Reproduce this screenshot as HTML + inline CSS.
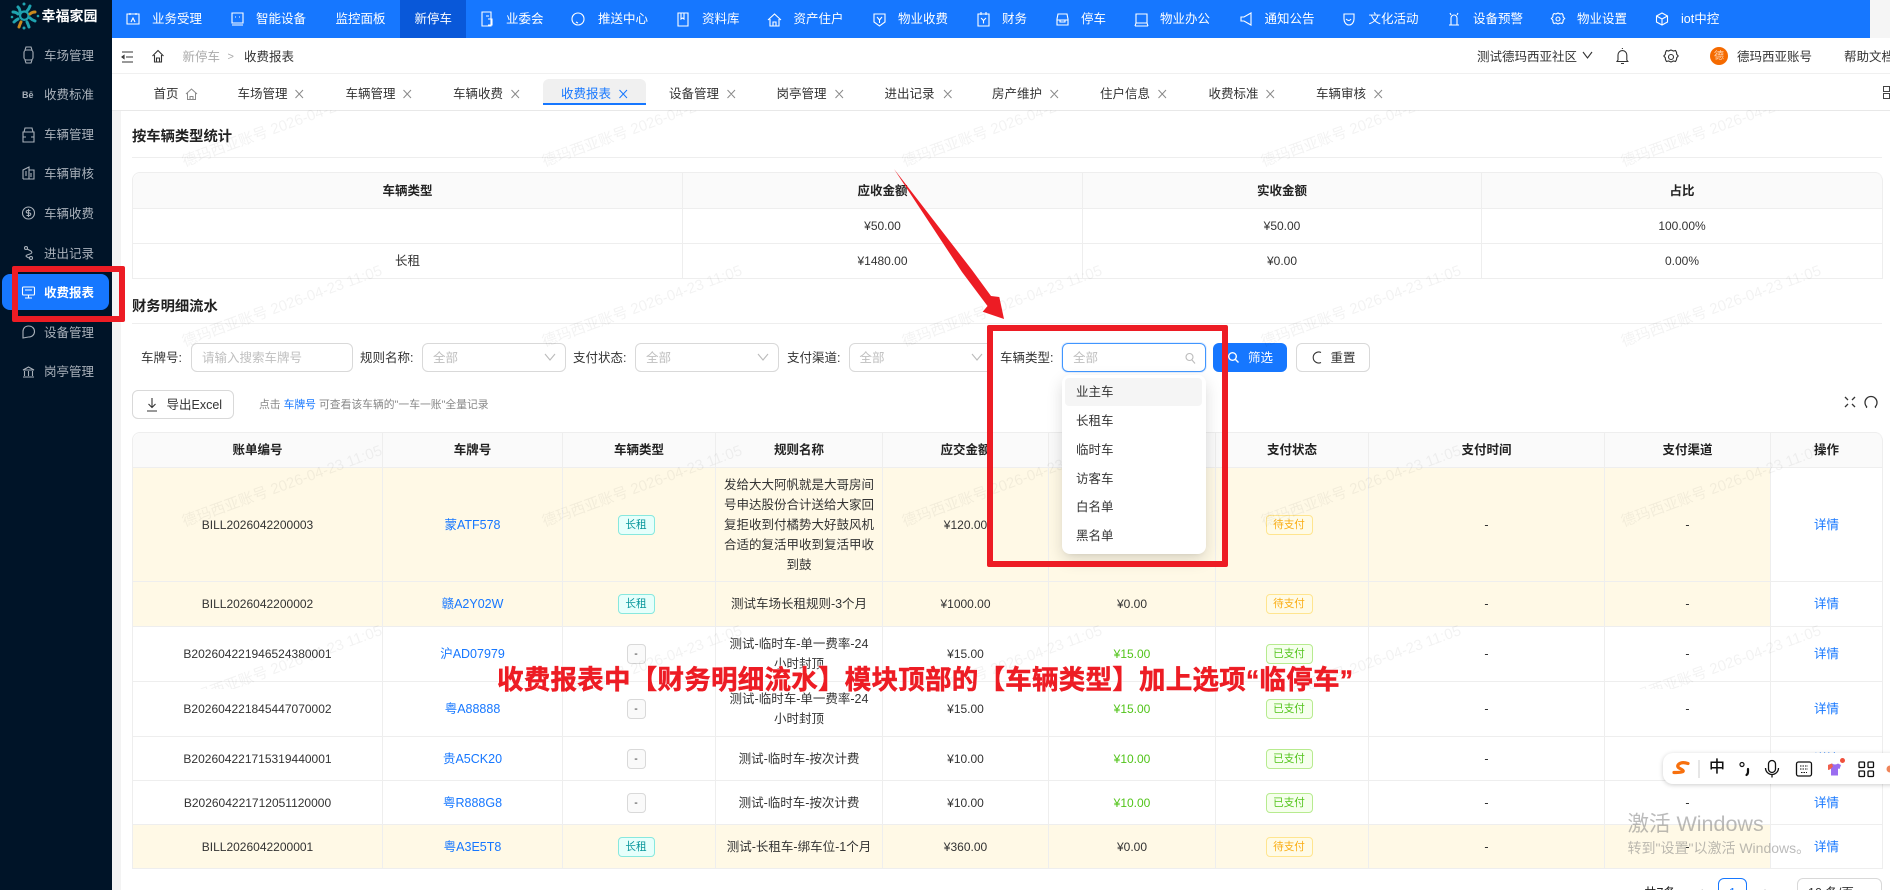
<!DOCTYPE html>
<html lang="zh-CN"><head><meta charset="utf-8"><title>收费报表</title>
<style>
*{box-sizing:border-box}
html,body{margin:0;padding:0;width:1890px;height:890px;overflow:hidden;background:#fff}
body{position:relative;font-family:"Liberation Sans","Noto Sans CJK SC",sans-serif;font-size:12.5px;color:#333}
.a{position:absolute;white-space:nowrap;line-height:20px}
.b{position:absolute}
svg{position:absolute;overflow:visible;fill:none}
.w{color:#fff}
.m{color:#a9b1ba;left:44px}
.ic{stroke:#a9b1ba;stroke-width:1.1}
.wi{stroke:#fff;stroke-width:1.1}
.box{position:absolute;top:343px;height:29px;background:#fff;border:1px solid #d9d9d9;border-radius:6px}
.ph{color:#bfbfbf}
table{position:absolute;border-collapse:separate;border-spacing:0;table-layout:fixed;left:132px;width:1750px;background:#fff;border-top:1px solid #eee;border-left:1px solid #eee;border-top-left-radius:8px;border-top-right-radius:8px;font-size:12.5px;color:#333}
th,td{border-right:1px solid #eee;border-bottom:1px solid #eee;text-align:center;padding:0 1px;line-height:20px;font-weight:400}
th{background:#fafafa;font-weight:700;color:#222}
th:first-child{border-top-left-radius:8px}
th:last-child{border-top-right-radius:8px}
tr.y td{background:#fff9e6}
tr.y td:last-child{background:#fff}
.n{font-size:12px}
.l{color:#1677ff}
.g{color:#52c41a;font-size:12px}
.tag{display:inline-block;position:relative;left:-3px;height:20px;line-height:18px;border-radius:4px;border:1px solid;font-size:10.6px;vertical-align:middle}
.z{width:37px;background:#e6fffb;border-color:#87e8de;color:#08979c}
.d{width:19px;background:#fafafa;border-color:#d9d9d9;color:#333}
.p{width:47px;background:#fffbe6;border-color:#ffe58f;color:#faad14}
.k{width:47px;background:#f6ffed;border-color:#b7eb8f;color:#52c41a}
#wm{position:absolute;left:120px;top:110px;width:1770px;height:579px;overflow:hidden;z-index:3;pointer-events:none}
#wm span{position:absolute;white-space:nowrap;font-size:15px;line-height:20px;color:rgba(0,0,0,.05);transform:rotate(-20deg);transform-origin:0 50%}
</style></head><body>

<!-- sidebar -->
<div class="b" style="left:0;top:0;width:112px;height:890px;background:#001428"></div>
<svg style="left:0;top:0" width="112" height="32">
<g stroke-width="3" stroke-linecap="round">
<circle cx="24.3" cy="15.7" r="4.2" stroke="#1fa3b0" stroke-width="2.2"/>
<path d="M18 7q2 2 2 5" stroke="#1fa3b0"/><path d="M30 6q-1 3-3 5" stroke="#1fa3b0"/><path d="M35 12q-3 0-5 2" stroke="#c98a1e"/><path d="M35 21q-3-1-5-3" stroke="#1fa3b0"/><path d="M29 27q-1-3-2-5" stroke="#1fa3b0"/><path d="M19 27q1-3 2-5" stroke="#c98a1e"/><path d="M14 22q2-2 4-3" stroke="#1fa3b0"/><path d="M13 12q3 0 5 2" stroke="#1fa3b0"/>
</g>
<g fill="#1fa3b0"><circle cx="24" cy="4" r="1.5"/><circle cx="38" cy="16" r="1.3"/><circle cx="24" cy="28" r="1.5"/><circle cx="12" cy="17" r="1.3"/></g>
</svg>
<span class="a w" style="left:41.5px;top:6px;font-size:14px;font-weight:700">幸福家园</span>

<div class="b" style="left:2px;top:274px;width:107px;height:36px;background:#1677ff;border-radius:8px"></div>
<span class="a m" style="top:46px">车场管理</span>
<span class="a m" style="top:85px">收费标准</span>
<span class="a m" style="top:125px">车辆管理</span>
<span class="a m" style="top:164px">车辆审核</span>
<span class="a m" style="top:204px">车辆收费</span>
<span class="a m" style="top:244px">进出记录</span>
<span class="a" style="left:44px;top:283px;color:#fff;font-weight:700">收费报表</span>
<span class="a m" style="top:323px">设备管理</span>
<span class="a m" style="top:362px">岗亭管理</span>
<span class="a" style="left:22px;top:85px;font-size:9px;font-weight:700;color:#a9b1ba">Bē</span>
<svg style="left:0;top:0" width="112" height="400">
<g class="ic"><rect x="24" y="50" width="9" height="10" rx="2.5"/><path d="M25 50l1-3h5l1 3M25 60l1 3h5l1-3"/></g>
<g class="ic"><path d="M23 171h11v10H23zM24 171l1-4h7l1 4M23 176h3M31 176h3" transform="translate(0,-39)"/></g>
<g class="ic"><path d="M23 179v-9l6-3v12M29 170h5v9H23M26 171v5M31 173v4"/></g>
<g class="ic"><circle cx="28.5" cy="213" r="6"/><path d="M30.5 210.5h-3a1.2 1.2 0 000 2.500h2a1.200 1.200 0 010 2.500h-3M28.500 209v8"/></g>
<g class="ic"><circle cx="26" cy="248" r="1.500"/><circle cx="31" cy="258" r="1.500"/><path d="M27 249l4 2q2 2-1 3l-3 1q-2 1 0 2l2 1"/></g>
<g class="wi"><rect x="22.500" y="287" width="12" height="8" rx="1"/><path d="M28.500 295v2.500M25 298h7M25 290h7"/></g>
<g class="ic"><path d="M28.500 326c3.600 0 6 2.400 6 5.500s-2.400 5.500-6 5.500l-5.500 1v-6.500c0-3.100 2-5.500 5.500-5.500z"/></g>
<g class="ic"><path d="M23 370l5.500-3 5.500 3zM23 377h11M24.500 371v5M28.500 371v5M32.500 371v5"/></g>
</svg>

<!-- top bar -->
<div class="b" style="left:112px;top:0;width:1758px;height:38px;background:#1677ff"></div>
<div class="b" style="left:1870px;top:0;width:20px;height:38px;background:#f5f5f5"></div>
<div class="b" style="left:400px;top:0;width:66px;height:38px;background:#0958d9"></div>
<span class="a w" style="left:152px;top:9px">业务受理</span>
<span class="a w" style="left:256px;top:9px">智能设备</span>
<span class="a w" style="left:335.500px;top:9px">监控面板</span>
<span class="a w" style="left:414.500px;top:9px">新停车</span>
<span class="a w" style="left:506px;top:9px">业委会</span>
<span class="a w" style="left:598px;top:9px">推送中心</span>
<span class="a w" style="left:702px;top:9px">资料库</span>
<span class="a w" style="left:793.500px;top:9px">资产住户</span>
<span class="a w" style="left:898px;top:9px">物业收费</span>
<span class="a w" style="left:1002px;top:9px">财务</span>
<span class="a w" style="left:1081px;top:9px">停车</span>
<span class="a w" style="left:1160px;top:9px">物业办公</span>
<span class="a w" style="left:1264.500px;top:9px">通知公告</span>
<span class="a w" style="left:1368.500px;top:9px">文化活动</span>
<span class="a w" style="left:1473px;top:9px">设备预警</span>
<span class="a w" style="left:1577px;top:9px">物业设置</span>
<span class="a w" style="left:1681px;top:9px">iot中控</span>
<svg style="left:0;top:0" width="1890" height="38"><g class="wi">
<path d="M127 14h12v10h-12zM130 13v2M136 13v2M131 22l2-4 2 4"/>
<path d="M232 13h11v10h-11zM232 25h11M235 17h1M239 17h1"/>
<path d="M482 12h9v14h-9zM486 16h3M488 19h4v6h-4"/>
<path d="M578 13c3.300 0 6 2.500 6 6s-2.700 6-6 6c-3.300 0-6-2.500-6-6s2.700-6 6-6zM576 22l2 1"/>
<path d="M678 13h10v13h-10zM681 13v6l1.500-1 1.500 1v-6"/>
<path d="M768 20l6.500-6 6.500 6M770 19v7h9v-7M773 26v-4h3v4"/>
<path d="M874 14h11v8l-5.500 4-5.500-4zM877 17l2.500 3 2.500-3M879.500 20v3"/>
<path d="M978 14h11v12h-11zM981 12v3M986 12v3M981 18l2.500 2.500 2.500-2.500M983.500 20.500v3"/>
<path d="M1057 25v-6l1-5h9l1 5v6zM1057 20h11M1060 20v2h5v-2"/>
<path d="M1136 14h11v9h-11zM1135 26h13M1136 23l-1 3M1147 23l1 3"/>
<path d="M1251 13v12l-7-4h-3v-4h3z"/>
<path d="M1344 14h10v5c0 3-2 6-5 6s-5-3-5-6zM1346 19q3 3 5 0"/>
<path d="M1449 25h10M1451 25v-7a3 3 0 016 0v7M1450 13l1 2M1458 13l-1 2"/>
<path d="M1558 13l2 1 2-.5 1 1.500.2 2 1.500 1.500-1.500 1.500-.2 2-1 1.500-2-.5-2 1-2-1-2 .5-1-1.500-.2-2-1.500-1.500 1.500-1.500.2-2 1-1.500 2 .5z"/><circle cx="1558" cy="19" r="2"/>
<path d="M1662 13l5.500 3v6l-5.500 3-5.500-3v-6zM1656.500 16l5.500 3 5.500-3M1662 19v6"/>
</g></svg>

<!-- header row -->
<div class="b" style="left:112px;top:73px;width:1778px;height:1px;background:#f0f0f0"></div>
<span class="a" style="left:182.500px;top:46.500px;color:#aaa">新停车</span>
<span class="a" style="left:227.500px;top:46.500px;color:#aaa;font-size:11px">&gt;</span>
<span class="a" style="left:244px;top:46.500px">收费报表</span>
<span class="a" style="left:1477px;top:46.500px">测试德玛西亚社区</span>
<span class="a" style="left:1737px;top:46.500px">德玛西亚账号</span>
<span class="a" style="left:1844px;top:47px">帮助文档</span>
<div class="b" style="left:1710px;top:47px;width:18px;height:18px;border-radius:50%;background:#f56a00"></div>
<span class="a" style="left:1714px;top:46.500px;width:10px;color:#ffd9b8;font-size:10px;text-align:center">德</span>
<svg style="left:0;top:0" width="1890" height="74"><g stroke="#333" stroke-width="1.100">
<path d="M122 52h11M126 57h7M122 62h11M122 57l2-1.500v3z"/>
<path d="M152.500 56l5.500-5.500 5.500 5.500M154.500 55v7h7v-7M156.500 62v-4h3v4"/>
<path d="M1583 52l4.500 6 4.500-6"/>
<path d="M1618 60v-5a4.400 4.400 0 018.800 0v5l1 1.500h-10.800zM1621 63.500h3M1622.400 49v-1"/>
<path d="M1671 50l2.500 1 2-.5 1 1.800.2 2 1.500 1.700-1.500 1.700-.2 2-1 1.800-2-.5-2.500 1-2.500-1-2 .5-1-1.800-.2-2-1.500-1.700 1.500-1.700.2-2 1-1.800 2 .5z"/><circle cx="1671" cy="57" r="2.500"/>
</g></svg>

<!-- tabs -->
<div class="b" style="left:112px;top:110px;width:1778px;height:1px;background:#e8e8e8"></div>
<div class="b" style="left:543px;top:78.500px;width:103px;height:26.500px;background:#f0f0f0;border-bottom:2px solid #1677ff;border-radius:6px 6px 0 0"></div>
<span class="a" style="left:153.500px;top:84px">首页</span>
<span class="a" style="left:237.500px;top:84px">车场管理</span>
<span class="a" style="left:345.500px;top:84px">车辆管理</span>
<span class="a" style="left:453px;top:84px">车辆收费</span>
<span class="a l" style="left:561px;top:84px">收费报表</span>
<span class="a" style="left:669px;top:84px">设备管理</span>
<span class="a" style="left:776.500px;top:84px">岗亭管理</span>
<span class="a" style="left:884.500px;top:84px">进出记录</span>
<span class="a" style="left:992px;top:84px">房产维护</span>
<span class="a" style="left:1100px;top:84px">住户信息</span>
<span class="a" style="left:1208.500px;top:84px">收费标准</span>
<span class="a" style="left:1316px;top:84px">车辆审核</span>
<svg style="left:0;top:0" width="1890" height="110"><g stroke="#8a8a8a" stroke-width="1">
<path d="M186 94l5.500-5 5.500 5M187.500 93v6.500h8V93M190 99.500v-3h3v3"/>
<path d="M295.500 90l7.500 8M303 90l-7.500 8M403.500 90l7.500 8M411 90l-7.500 8M511.500 90l7.500 8M519 90l-7.500 8"/>
<path stroke="#1677ff" d="M619.500 90l7.500 8M627 90l-7.500 8"/>
<path d="M727.500 90l7.500 8M735 90l-7.500 8M835.500 90l7.500 8M843 90l-7.500 8M944 90l7.500 8M951.500 90l-7.500 8M1050.500 90l7.500 8M1058 90l-7.500 8M1158.500 90l7.500 8M1166 90l-7.500 8M1266.500 90l7.500 8M1274 90l-7.500 8M1374.500 90l7.500 8M1382 90l-7.500 8"/>
<path stroke="#444" d="M1883.500 86.500h6v5h-6zM1883.500 93.500h6v5h-6z"/>
</g></svg>

<!-- gray strip -->
<div class="b" style="left:112px;top:111px;width:8.500px;height:779px;background:#f3f3f3"></div>

<!-- section 1 -->
<span class="a" style="left:132px;top:127px;font-size:14.300px;font-weight:700;color:#222">按车辆类型统计</span>
<div class="b" style="left:132px;top:157px;width:1750px;height:1px;background:#eee"></div>
<table style="top:172px;height:107px">
<colgroup><col style="width:550px"><col style="width:400px"><col style="width:399px"><col style="width:401px"></colgroup>
<tr style="height:36px"><th>车辆类型</th><th>应收金额</th><th>实收金额</th><th>占比</th></tr>
<tr style="height:35px"><td></td><td class="n">¥50.00</td><td class="n">¥50.00</td><td class="n">100.00%</td></tr>
<tr style="height:35px"><td>长租</td><td class="n">¥1480.00</td><td class="n">¥0.00</td><td class="n">0.00%</td></tr>
</table>

<!-- section 2 -->
<span class="a" style="left:132px;top:297px;font-size:14.300px;font-weight:700;color:#222">财务明细流水</span>
<div class="b" style="left:132px;top:323px;width:1750px;height:1px;background:#eee"></div>

<span class="a" style="left:141px;top:347.500px">车牌号:</span>
<div class="box" style="left:191px;width:162px"></div>
<span class="a ph" style="left:202px;top:347.500px">请输入搜索车牌号</span>
<span class="a" style="left:360px;top:347.500px">规则名称:</span>
<div class="box" style="left:422px;width:144px"></div>
<span class="a ph" style="left:433px;top:348px">全部</span>
<span class="a" style="left:573px;top:347.500px">支付状态:</span>
<div class="box" style="left:635px;width:144px"></div>
<span class="a ph" style="left:646px;top:348px">全部</span>
<span class="a" style="left:787px;top:347.500px">支付渠道:</span>
<div class="box" style="left:849px;width:144px"></div>
<span class="a ph" style="left:859.500px;top:348px">全部</span>
<span class="a" style="left:1000px;top:347.500px">车辆类型:</span>
<div class="box" style="left:1062px;width:144px;border-color:#4096ff;box-shadow:0 0 0 1px rgba(22,119,255,.12)"></div>
<span class="a ph" style="left:1073px;top:348px">全部</span>
<div class="b" style="left:1213px;top:343px;width:74px;height:29px;background:#1677ff;border-radius:6px"></div>
<span class="a w" style="left:1248px;top:347.500px">筛选</span>
<div class="box" style="left:1296px;width:74px"></div>
<span class="a" style="left:1330.500px;top:347.500px">重置</span>
<svg style="left:0;top:0;z-index:2" width="1890" height="420"><g stroke-width="1.100">
<path stroke="#bbb" d="M545 354l5 6 5-6M758 354l5 6 5-6M972 354l5 6 5-6"/>
<circle stroke="#bbb" cx="1189.500" cy="357" r="3.500"/><path stroke="#bbb" d="M1192 360l3 3.500"/>
<circle stroke="#fff" stroke-width="1.400" cx="1232.500" cy="356.500" r="3.800"/><path stroke="#fff" stroke-width="1.400" d="M1235.500 359.500l3 3"/>
<path stroke="#333" d="M1321 352.500a5.500 5.500 0 100 10"/>
<path stroke="#333" d="M152 398v9M148.500 404l3.500 3.500 3.500-3.500M147 411h10"/>
<path stroke="#333" stroke-width="1.300" d="M1845 397l3 3M1855 397l-3 3M1845 407l3-3M1855 407l-3-3"/>
<path stroke="#333" stroke-width="1.300" d="M1867 407a6 6 0 118 0M1867 407l-1 .5M1875 407l1 .5"/>
</g></svg>

<div class="b" style="left:132px;top:390px;width:102px;height:29px;border:1px solid #d9d9d9;border-radius:6px"></div>
<span class="a" style="left:166.500px;top:394.500px">导出Excel</span>
<span class="a" style="left:259px;top:395px;font-size:10.800px;color:#888">点击 <span class="l">车牌号</span> 可查看该车辆的"一车一账"全量记录</span>

<table style="top:432px">
<colgroup><col style="width:250px"><col style="width:180px"><col style="width:153px"><col style="width:167px"><col style="width:166px"><col style="width:167px"><col style="width:153px"><col style="width:236px"><col style="width:166px"><col style="width:112px"></colgroup>
<tr style="height:35px"><th>账单编号</th><th>车牌号</th><th>车辆类型</th><th>规则名称</th><th>应交金额</th><th>实收金额</th><th>支付状态</th><th>支付时间</th><th>支付渠道</th><th>操作</th></tr>
<tr class="y" style="height:114px"><td class="n">BILL2026042200003</td><td class="l">蒙ATF578</td><td><span class="tag z">长租</span></td><td>发给大大阿帆就是大哥房间<br>号申达股份合计送给大家回<br>复拒收到付橘势大好鼓风机<br>合适的复活甲收到复活甲收<br>到鼓</td><td class="n">¥120.00</td><td class="n">¥0.00</td><td><span class="tag p">待支付</span></td><td>-</td><td>-</td><td class="l">详情</td></tr>
<tr class="y" style="height:45px"><td class="n">BILL2026042200002</td><td class="l">赣A2Y02W</td><td><span class="tag z">长租</span></td><td>测试车场长租规则-3个月</td><td class="n">¥1000.00</td><td class="n">¥0.00</td><td><span class="tag p">待支付</span></td><td>-</td><td>-</td><td class="l">详情</td></tr>
<tr style="height:55px"><td class="n">B202604221946524380001</td><td class="l">沪AD07979</td><td><span class="tag d">-</span></td><td>测试-临时车-单一费率-24<br>小时封顶</td><td class="n">¥15.00</td><td class="g">¥15.00</td><td><span class="tag k">已支付</span></td><td>-</td><td>-</td><td class="l">详情</td></tr>
<tr style="height:55px"><td class="n">B202604221845447070002</td><td class="l">粤A88888</td><td><span class="tag d">-</span></td><td>测试-临时车-单一费率-24<br>小时封顶</td><td class="n">¥15.00</td><td class="g">¥15.00</td><td><span class="tag k">已支付</span></td><td>-</td><td>-</td><td class="l">详情</td></tr>
<tr style="height:44px"><td class="n">B202604221715319440001</td><td class="l">贵A5CK20</td><td><span class="tag d">-</span></td><td>测试-临时车-按次计费</td><td class="n">¥10.00</td><td class="g">¥10.00</td><td><span class="tag k">已支付</span></td><td>-</td><td>-</td><td class="l">详情</td></tr>
<tr style="height:44px"><td class="n">B202604221712051120000</td><td class="l">粤R888G8</td><td><span class="tag d">-</span></td><td>测试-临时车-按次计费</td><td class="n">¥10.00</td><td class="g">¥10.00</td><td><span class="tag k">已支付</span></td><td>-</td><td>-</td><td class="l">详情</td></tr>
<tr class="y" style="height:44px"><td class="n">BILL2026042200001</td><td class="l">粤A3E5T8</td><td><span class="tag z">长租</span></td><td>测试-长租车-绑车位-1个月</td><td class="n">¥360.00</td><td class="n">¥0.00</td><td><span class="tag p">待支付</span></td><td>-</td><td>-</td><td class="l">详情</td></tr>
</table>

<!-- pagination -->
<span class="a" style="left:1644px;top:883px;color:#222">共7条</span>
<span class="a" style="left:1696px;top:883px;color:#999">&lt;</span>
<div class="b" style="left:1718px;top:878px;width:29px;height:29px;border:1px solid #1677ff;border-radius:6px"></div>
<span class="a l" style="left:1729px;top:883px">1</span>
<span class="a" style="left:1764px;top:883px;color:#999">&gt;</span>
<div class="b" style="left:1797px;top:878px;width:85px;height:29px;border:1px solid #d9d9d9;border-radius:6px"></div>
<span class="a" style="left:1808px;top:883px">10 条/页</span>

<!-- watermark -->
<div id="wm">
<span style="left:63px;top:43px">德玛西亚账号 2026-04-23 11:05</span><span style="left:423px;top:43px">德玛西亚账号 2026-04-23 11:05</span><span style="left:783px;top:43px">德玛西亚账号 2026-04-23 11:05</span><span style="left:1142px;top:43px">德玛西亚账号 2026-04-23 11:05</span><span style="left:1502px;top:43px">德玛西亚账号 2026-04-23 11:05</span>
<span style="left:63px;top:223px">德玛西亚账号 2026-04-23 11:05</span><span style="left:423px;top:223px">德玛西亚账号 2026-04-23 11:05</span><span style="left:783px;top:223px">德玛西亚账号 2026-04-23 11:05</span><span style="left:1142px;top:223px">德玛西亚账号 2026-04-23 11:05</span><span style="left:1502px;top:223px">德玛西亚账号 2026-04-23 11:05</span>
<span style="left:63px;top:403px">德玛西亚账号 2026-04-23 11:05</span><span style="left:423px;top:403px">德玛西亚账号 2026-04-23 11:05</span><span style="left:783px;top:403px">德玛西亚账号 2026-04-23 11:05</span><span style="left:1142px;top:403px">德玛西亚账号 2026-04-23 11:05</span><span style="left:1502px;top:403px">德玛西亚账号 2026-04-23 11:05</span>
<span style="left:63px;top:583px">德玛西亚账号 2026-04-23 11:05</span><span style="left:423px;top:583px">德玛西亚账号 2026-04-23 11:05</span><span style="left:783px;top:583px">德玛西亚账号 2026-04-23 11:05</span><span style="left:1142px;top:583px">德玛西亚账号 2026-04-23 11:05</span><span style="left:1502px;top:583px">德玛西亚账号 2026-04-23 11:05</span>
</div>

<!-- dropdown -->
<div class="b" style="left:1062px;top:375px;width:144px;height:179px;background:#fff;border-radius:8px;box-shadow:0 6px 16px rgba(0,0,0,.14),0 3px 6px -4px rgba(0,0,0,.12);z-index:4">
<div class="b" style="left:3px;top:3px;width:137px;height:28px;background:#f5f5f5;border-radius:4px"></div>
<span class="a" style="left:14px;top:7px">业主车</span>
<span class="a" style="left:14px;top:36px">长租车</span>
<span class="a" style="left:14px;top:65px">临时车</span>
<span class="a" style="left:14px;top:94px">访客车</span>
<span class="a" style="left:14px;top:122px">白名单</span>
<span class="a" style="left:14px;top:151px">黑名单</span>
</div>

<!-- annotations -->
<div class="b" style="left:12px;top:266px;width:113px;height:56px;border:6px solid #ed1c24;border-radius:2px;z-index:5"></div>
<div class="b" style="left:987px;top:325px;width:241px;height:242px;border:6px solid #ed1c24;border-radius:2px;z-index:5"></div>
<svg style="left:0;top:0;z-index:5" width="1890" height="340"><polygon fill="#ed1c24" points="894,169 972,270 991,296 999.300,297 1004,319 982.700,311.700 987.500,306 962,272"/></svg>
<span class="a" style="left:497px;top:665px;line-height:30px;font-size:26.500px;letter-spacing:.25px;font-weight:700;color:#ed1c24;-webkit-text-stroke:.5px #ed1c24;z-index:5;text-shadow:0 0 2px #fff,0 0 2px #fff">收费报表中【财务明细流水】模块顶部的【车辆类型】加上选项“临停车”</span>

<!-- windows activation -->
<span class="a" style="left:1627.500px;top:812px;line-height:24px;font-size:21.500px;color:rgba(120,120,120,.5);z-index:6">激活 Windows</span>
<span class="a" style="left:1627.500px;top:838px;font-size:14px;color:rgba(120,120,120,.5);z-index:6">转到"设置"以激活 Windows。</span>

<!-- IME bar -->
<div class="b" style="left:1663px;top:753px;width:240px;height:31px;background:#fff;border-radius:10px;box-shadow:0 1px 5px rgba(0,0,0,.2);z-index:7"></div>
<span class="a" style="left:1709px;top:758px;font-size:16px;font-weight:500;color:#111;z-index:8">中</span>
<svg style="left:0;top:0;z-index:8" width="1890" height="800">
<path d="M1688 763.500q-6-2-9 .5t1 4.500 3 3-9 1" stroke="#f7700d" stroke-width="3.200" stroke-linecap="round"/>
<path d="M1699 760v18" stroke="#ccc"/>
<circle cx="1742" cy="764.500" r="2" stroke="#111" stroke-width="1.200"/>
<path d="M1748 769v3q0 2-1.500 3" stroke="#111" stroke-width="2.200" stroke-linecap="round"/>
<rect x="1768.500" y="760.500" width="7" height="12" rx="3.500" stroke="#111" stroke-width="1.300"/>
<path d="M1765.500 768a6.500 6.500 0 0013 0M1772 774.500v3" stroke="#111" stroke-width="1.300"/>
<rect x="1796.500" y="762" width="15" height="14" rx="2" stroke="#111" stroke-width="1.300"/>
<path d="M1800 766h8M1800 769h8M1801 772.500h6" stroke="#111" stroke-dasharray="1.500 1"/>
<path d="M1828 765l4-1.500q3 2 6 0l3 1.500-1.500 4-1.500-.5v7h-7v-7l-2 .5z" fill="#9a6cf0"/>
<path d="M1828 765l4-1.500 1 3-3 3-2 .500z" fill="#f0604d"/>
<circle cx="1842.500" cy="760.500" r="2.500" fill="#f0503c"/>
<g stroke="#111" stroke-width="1.300"><rect x="1859" y="762" width="5.500" height="5.500" rx="1"/><rect x="1868" y="762" width="5.500" height="5.500" rx="1"/><rect x="1859" y="771" width="5.500" height="5.500" rx="1"/><rect x="1868" y="771" width="5.500" height="5.500" rx="1"/></g>
<circle cx="1890" cy="769" r="3.500" fill="#f0855a"/>
</svg>
</body></html>
